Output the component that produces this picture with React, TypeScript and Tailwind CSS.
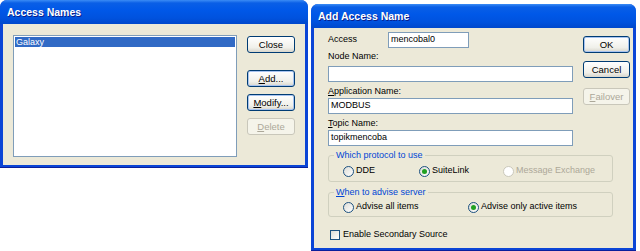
import React from "react";

const titleBg =
  "bg-[linear-gradient(180deg,#3b8cf5_0px,#0a5fe6_3px,#0058e8_10px,#0052de_18px,#0048cc_24px)]";

function Btn({
  children,
  disabled,
  def,
  w,
  h,
}: {
  children: React.ReactNode;
  disabled?: boolean;
  def?: boolean;
  w: string;
  h: string;
}) {
  return (
    <div
      className={`${w} ${h} flex items-center justify-center rounded-[3px] border text-[9.5px] leading-none ${
        disabled
          ? "border-[#c9c7ba] bg-[#f5f4ea] text-[#aca899]"
          : def
          ? "border-[#003c74] bg-[linear-gradient(180deg,#ffffff,#f0f0ea_70%,#d8d6cc)] text-black shadow-[inset_0_0_0_1px_#a8c4f0]"
          : "border-[#003c74] bg-[linear-gradient(180deg,#ffffff,#f0f0ea_70%,#d8d6cc)] text-black"
      }`}
    >
      {children}
    </div>
  );
}

function Radio({ checked, disabled }: { checked?: boolean; disabled?: boolean }) {
  return (
    <span
      className={`w-[11px] h-[11px] shrink-0 rounded-full border flex items-center justify-center ${
        disabled
          ? "border-[#cac8bb] bg-white"
          : "border-[#1c5180] bg-[linear-gradient(135deg,#dcdcd6,#ffffff)]"
      }`}
    >
      {checked && <span className="w-[5px] h-[5px] rounded-full bg-[#21a121]" />}
    </span>
  );
}

function TitleBar({ text }: { text: string }) {
  return (
    <div
      className={`h-[24px] shrink-0 flex items-center pl-[7px] pt-[2px] rounded-t-[7px] ${titleBg} text-white font-bold text-[10.5px] [text-shadow:1px_1px_0_#0a1e8a]`}
    >
      {text}
    </div>
  );
}

function Input({ value, w }: { value: string; w: string }) {
  return (
    <div
      className={`${w} h-[16px] border border-[#7f9db9] bg-white flex items-center pl-[2px] text-[9px] text-black`}
    >
      {value}
    </div>
  );
}

export default function App() {
  return (
    <div className="w-[640px] h-[251px] bg-white flex items-start font-['Liberation_Sans',Arial,sans-serif] text-[9px] text-black overflow-hidden">
      {/* Left dialog */}
      <div className="w-[308px] h-[168px] flex flex-col bg-[#0b45d6] rounded-t-[7px] border-b border-[#0a1f9c]">
        <TitleBar text="Access Names" />
        <div className="flex-1 mx-[3px] mb-[2px] bg-[#ece9d8] flex pt-[11px] pl-[10px] pb-[8px]">
          <div className="w-[224px] h-[122px] border border-[#7f9db9] bg-white p-[1px]">
            <div className="h-[10px] bg-[#316ac5] text-white text-[9px] leading-[10px] pl-[1px]">
              Galaxy
            </div>
          </div>
          <div className="ml-[10px] flex flex-col pt-[1px]">
            <Btn w="w-[48px]" h="h-[17px]">
              Close
            </Btn>
            <div className="mt-[17px]">
              <Btn w="w-[48px]" h="h-[17px]" def>
                <span>
                  <span className="underline">A</span>dd...
                </span>
              </Btn>
            </div>
            <div className="mt-[7px]">
              <Btn w="w-[48px]" h="h-[17px]" def>
                <span>
                  <span className="underline">M</span>odify...
                </span>
              </Btn>
            </div>
            <div className="mt-[7px]">
              <Btn w="w-[48px]" h="h-[17px]" disabled>
                <span>
                  <span className="underline">D</span>elete
                </span>
              </Btn>
            </div>
          </div>
        </div>
      </div>

      {/* Right dialog */}
      <div className="ml-[3px] mt-[4px] w-[325px] h-[247px] flex flex-col bg-[#0b45d6] rounded-t-[7px] border-b border-[#0a1f9c]">
        <TitleBar text="Add Access Name" />
        <div className="flex-1 mx-[3px] mb-[2px] bg-[#ece9d8] flex flex-col pl-[14px]">
          <div className="flex">
            <div className="w-[245px] flex flex-col">
              <div className="mt-[4px] h-[16px] flex items-center">
                <span className="w-[60px]">Access</span>
                <Input value="mencobal0" w="w-[81px]" />
              </div>
              <div className="mt-[2px] h-[12px] leading-[12px]">Node Name:</div>
              <div className="mt-[4px]">
                <Input value="" w="w-[245px]" />
              </div>
              <div className="mt-[3px] h-[12px] leading-[12px]">
                <span className="underline">A</span>pplication Name:
              </div>
              <div className="mt-[1px]">
                <Input value="MODBUS" w="w-[245px]" />
              </div>
              <div className="mt-[3px] h-[12px] leading-[12px]">
                <span className="underline">T</span>opic Name:
              </div>
              <div className="mt-[1px]">
                <Input value="topikmencoba" w="w-[245px]" />
              </div>
            </div>
            <div className="ml-[10px] flex flex-col pt-[8px]">
              <Btn w="w-[47px]" h="h-[17px]" def>
                OK
              </Btn>
              <div className="mt-[8px]">
                <Btn w="w-[47px]" h="h-[17px]">
                  Cancel
                </Btn>
              </div>
              <div className="mt-[10px]">
                <Btn w="w-[47px]" h="h-[17px]" disabled>
                  <span>
                    <span className="underline">F</span>ailover
                  </span>
                </Btn>
              </div>
            </div>
          </div>

          <fieldset className="mt-[3px] w-[285px] border border-[#d0d0bf] rounded-[3px]">
            <legend className="ml-[5px] px-[2px] leading-[12px] text-[#0046d5]">
              Which protocol to use
            </legend>
            <div className="pt-[4px] pb-[4px] pl-[14px] flex h-[20px] items-center">
              <div className="w-[76px] flex items-center">
                <Radio />
                <span className="ml-[2px]">DDE</span>
              </div>
              <div className="w-[84px] flex items-center">
                <Radio checked />
                <span className="ml-[2px]">SuiteLink</span>
              </div>
              <div className="flex items-center">
                <Radio disabled />
                <span className="ml-[2px] text-[#aca899]">Message Exchange</span>
              </div>
            </div>
          </fieldset>

          <fieldset className="mt-[4px] w-[285px] border border-[#d0d0bf] rounded-[3px]">
            <legend className="ml-[5px] px-[2px] leading-[12px] text-[#0046d5]">
              <span className="underline">W</span>hen to advise server
            </legend>
            <div className="pt-[3px] pb-[3px] pl-[14px] flex h-[18px] items-center">
              <div className="w-[125px] flex items-center">
                <Radio />
                <span className="ml-[2px]">Advise all items</span>
              </div>
              <div className="flex items-center">
                <Radio checked />
                <span className="ml-[2px]">Advise only active items</span>
              </div>
            </div>
          </fieldset>

          <div className="mt-[12px] h-[12px] flex items-center pl-[2px]">
            <span className="w-[10px] h-[10px] border border-[#1c5180] bg-[linear-gradient(135deg,#dcdcd6,#ffffff)]" />
            <span className="ml-[3px]">Enable Secondary Source</span>
          </div>
        </div>
      </div>
    </div>
  );
}
